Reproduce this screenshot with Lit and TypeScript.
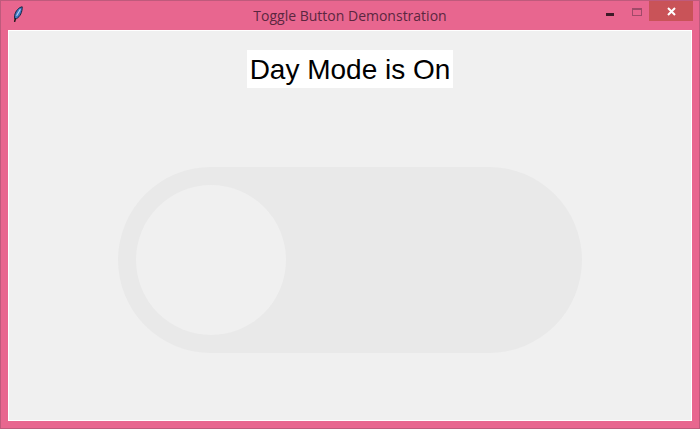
import { LitElement, html, css } from "lit";
import { customElement } from "lit/decorators.js";

@customElement("app-root")
export class AppRoot extends LitElement {
  static styles = css`
    :host { display: block; width: 700px; height: 429px; }
    .window {
      box-sizing: border-box; width: 700px; height: 429px;
      background: #e8668f; border: 1px solid #bf5a7c;
      display: flex; flex-direction: column;
      padding: 0 7px 7px;
    }
    .titlebar {
      height: 29px; flex: none; display: grid;
      grid-template-columns: 1fr auto 1fr; align-items: start;
    }
    .feather { display: block; margin: 5px 0 0 5px; width: 10px; height: 17px; }
    .title {
      font: 14px/29px "Open Sans", "Noto Sans", sans-serif;
      color: #5b2740; white-space: nowrap;
    }
    .controls { display: flex; justify-content: flex-end; align-items: flex-start; }
    .min { width: 8px; height: 3px; background: #3d1a28; margin: 12px 18px 0 0; }
    .max {
      box-sizing: border-box; width: 10px; height: 8px;
      border: 1px solid #a04a69; border-top-width: 2px; margin: 7px 7px 0 0;
    }
    .close {
      width: 44px; height: 20px; background: #c95358; margin-right: -1px;
      display: flex; align-items: center; justify-content: center;
    }
    .close svg { display: block; width: 9px; height: 9px; }
    .content {
      flex: 1; background: #f0f0f0;
      border: 1px solid #fff;
      display: flex; flex-direction: column; align-items: center;
      padding-top: 19px; box-sizing: border-box;
    }
    .label {
      font: 28px/40px "Liberation Sans", Arial, sans-serif;
      color: #000; background: #fff; padding: 0 3px;
      height: 38px; white-space: nowrap;
    }
    .toggle {
      box-sizing: border-box; width: 464px; height: 186px; margin-top: 79px;
      border-radius: 93px; background: #e9e9e9; padding: 18px;
      display: flex; justify-content: flex-start;
    }
    .knob { width: 150px; height: 150px; border-radius: 50%; background: #f0f0f0; }
  `;

  render() {
    return html`
      <div class="window">
        <div class="titlebar">
          <svg class="feather" viewBox="0 0 10 17">
            <path d="M9.2 0.8C6.2 1.2 2.6 4.5 1.6 9.5L1.6 12.6L3.6 12.6C7 10.8 9.4 6 9.2 0.8Z" fill="#3f78c4" stroke="#16263f" stroke-width="1"/>
            <path d="M7.4 3.2L3.6 9.8" stroke="#b8d4f2" stroke-width="1.1"/>
            <path d="M2.4 12.5L1.6 15.8" stroke="#111" stroke-width="1.4"/>
          </svg>
          <div class="title">Toggle Button Demonstration</div>
          <div class="controls">
            <div class="min"></div>
            <div class="max"></div>
            <div class="close">
              <svg viewBox="0 0 9 9"><path d="M1 1L8 8M8 1L1 8" stroke="#fff" stroke-width="2"/></svg>
            </div>
          </div>
        </div>
        <div class="content">
          <div class="label">Day Mode is On</div>
          <div class="toggle"><div class="knob"></div></div>
        </div>
      </div>
    `;
  }
}
